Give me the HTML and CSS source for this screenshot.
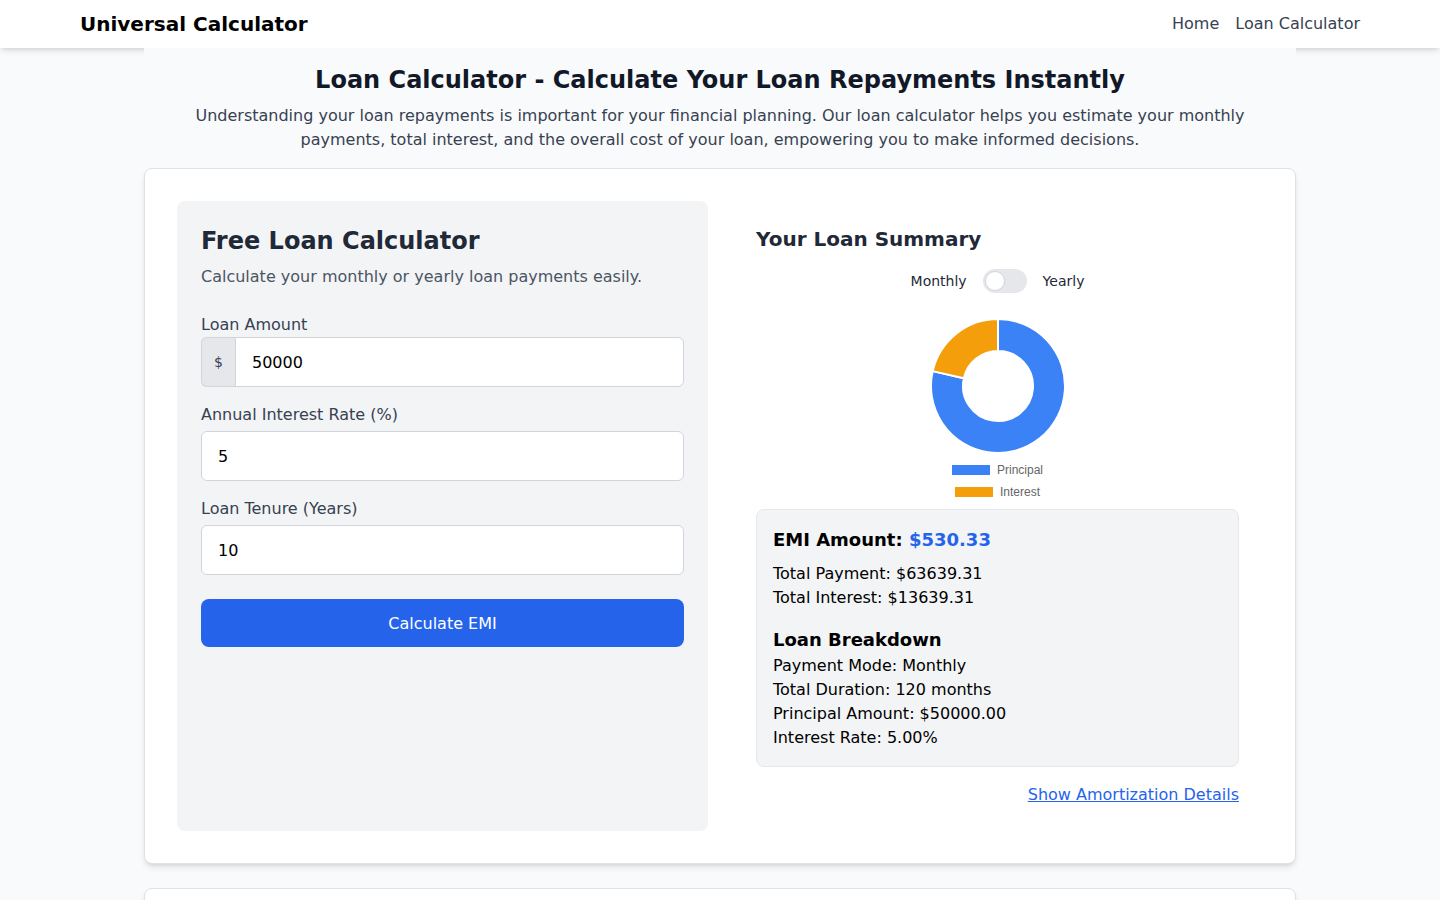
FILE: index.html
```html
<!DOCTYPE html>
<html lang="en">
<head>
    <meta charset="UTF-8">
    <meta name="viewport" content="width=device-width, initial-scale=1.0">
    <title>Loan Calculator - Universal Calculator</title>
    <link rel="stylesheet" href="styles.css">
</head>

<body>

    <!-- Header -->
    <header class="header">
        <div class="header-inner">
            <a class="brand" href="#">Universal Calculator</a>
            <nav class="nav">
                <a href="#">Home</a>
                <a href="#">Loan Calculator</a>
            </nav>
        </div>
    </header>

    <main class="container">
        <h1>Loan Calculator - Calculate Your Loan Repayments Instantly</h1>
        <p class="intro">Understanding your loan repayments is important for your financial planning. Our loan calculator helps you estimate your monthly payments, total interest, and the overall cost of your loan, empowering you to make informed decisions.</p>

        <!-- Calculator card -->
        <section class="card calc-card">
            <div class="calc-grid">

                <!-- Form -->
                <div class="form-panel">
                    <h2>Free Loan Calculator</h2>
                    <p class="form-sub">Calculate your monthly or yearly loan payments easily.</p>

                    <div class="field field-group">
                        <label for="amount">Loan Amount</label>
                        <div class="input-group">
                            <span class="prefix">$</span>
                            <input type="text" id="amount" value="50000">
                        </div>
                    </div>

                    <div class="field">
                        <label for="rate">Annual Interest Rate (%)</label>
                        <input type="text" id="rate" value="5">
                    </div>

                    <div class="field">
                        <label for="tenure">Loan Tenure (Years)</label>
                        <input type="text" id="tenure" value="10">
                    </div>

                    <button class="calc-btn">Calculate EMI</button>
                </div>

                <!-- Summary -->
                <div class="summary-panel">
                    <h3>Your Loan Summary</h3>

                    <div class="toggle-row">
                        <span>Monthly</span>
                        <span class="toggle"><span class="knob"></span></span>
                        <span>Yearly</span>
                    </div>

                    <div class="chart">
                        <svg width="136" height="136" viewBox="0 0 136 136">
                            <path d="M68 1 A67 67 0 1 1 2.67 53.10 L33.87 60.22 A35 35 0 1 0 68 33 Z" fill="#3b82f6" stroke="#fff" stroke-width="2"/>
                            <path d="M2.67 53.10 A67 67 0 0 1 68 1 L68 33 A35 35 0 0 0 33.87 60.22 Z" fill="#f59e0b" stroke="#fff" stroke-width="2"/>
                        </svg>
                        <div class="legend">
                            <div class="legend-item"><span class="swatch blue"></span>Principal</div>
                            <div class="legend-item"><span class="swatch orange"></span>Interest</div>
                        </div>
                    </div>

                    <div class="result-box">
                        <h4>EMI Amount: <span class="emi">$530.33</span></h4>
                        <p>Total Payment: $63639.31</p>
                        <p>Total Interest: $13639.31</p>

                        <h4 class="breakdown">Loan Breakdown</h4>
                        <p>Payment Mode: Monthly</p>
                        <p>Total Duration: 120 months</p>
                        <p>Principal Amount: $50000.00</p>
                        <p>Interest Rate: 5.00%</p>
                    </div>

                    <div class="link-row">
                        <a href="#">Show Amortization Details</a>
                    </div>
                </div>
            </div>
        </section>

        <!-- Info card -->
        <section class="card info-card">
            <h2>How Loan Repayments Work</h2>
            <p>Your EMI depends on the loan amount, the interest rate and the tenure you choose.</p>
        </section>
    </main>

</body>
</html>
```

FILE: styles.css
```css
/* Base styles */
body {
    font-family: "DejaVu Sans", sans-serif;
    margin: 0;
    padding: 0;
    background-color: #f9fafb;
    color: #111827;
    font-size: 16px;
    line-height: 24px;
}

a {
    text-decoration: none;
}

/* Header */
.header {
    background: #fff;
    box-shadow: 0 4px 6px -1px rgba(0, 0, 0, 0.1), 0 2px 4px -2px rgba(0, 0, 0, 0.1);
}

.header-inner {
    max-width: 1280px;
    margin: 0 auto;
    height: 48px;
    display: flex;
    align-items: center;
    justify-content: space-between;
}

.brand {
    color: #000;
    font-size: 20px;
    font-weight: bold;
}

.nav {
    display: flex;
    gap: 16px;
}

.nav a {
    color: #374151;
}

/* Container */
.container {
    position: relative;
    max-width: 1152px;
    margin: 0 auto;
    padding-top: 16px;
    background-color: #f9fafb;
}

h1 {
    margin: 0 0 8px;
    font-size: 24px;
    line-height: 32px;
    text-align: center;
    color: #111827;
}

.intro {
    margin: 0 0 16px;
    padding: 0 16px;
    text-align: center;
    color: #374151;
}

/* Cards */
.card {
    background: #fff;
    border: 1px solid #dfe2e7;
    border-radius: 8px;
    box-shadow: 0 4px 6px -1px rgba(0, 0, 0, 0.1), 0 2px 4px -2px rgba(0, 0, 0, 0.1);
}

.calc-card {
    padding: 32px;
    margin-bottom: 24px;
}

.calc-grid {
    display: grid;
    grid-template-columns: 1fr 1fr;
    gap: 24px;
}

/* Form panel */
.form-panel {
    background: #f3f4f6;
    border-radius: 8px;
    padding: 24px;
}

.form-panel h2 {
    margin: 0 0 8px;
    font-size: 24px;
    line-height: 32px;
    color: #1f2937;
}

.form-sub {
    margin: 0 0 24px;
    color: #4b5563;
}

.field {
    margin-bottom: 16px;
}

.field label {
    display: block;
    margin-bottom: 4px;
    color: #374151;
}

.field-group label {
    margin-bottom: 0;
}

.field input {
    display: block;
    width: 100%;
    box-sizing: border-box;
    height: 50px;
    padding: 12px 16px;
    border: 1px solid #d1d5db;
    border-radius: 6px;
    background: #fff;
    font-family: inherit;
    font-size: 16px;
    color: #000;
    outline: none;
}

.input-group {
    display: flex;
}

.prefix {
    display: flex;
    align-items: center;
    justify-content: center;
    flex-shrink: 0;
    width: 33px;
    background: #e5e7eb;
    border: 1px solid #d1d5db;
    border-right: none;
    border-radius: 6px 0 0 6px;
    font-size: 14px;
    color: #374151;
}

.input-group input {
    border-radius: 0 6px 6px 0;
}

.calc-btn {
    display: block;
    width: 100%;
    height: 48px;
    margin-top: 24px;
    background: #2563eb;
    color: #fff;
    border: none;
    border-radius: 8px;
    font-family: inherit;
    font-size: 16px;
    cursor: pointer;
}

/* Summary panel */
.summary-panel {
    padding: 24px;
}

.summary-panel h3 {
    margin: 0;
    font-size: 20px;
    line-height: 28px;
    color: #1f2937;
}

.toggle-row {
    display: flex;
    justify-content: center;
    align-items: center;
    gap: 16px;
    margin-top: 16px;
    font-size: 14px;
    color: #1f2937;
}

.toggle {
    position: relative;
    width: 44px;
    height: 24px;
    border-radius: 12px;
    background: #e5e7eb;
}

.knob {
    position: absolute;
    top: 2px;
    left: 2px;
    width: 18px;
    height: 18px;
    border-radius: 50%;
    background: #fff;
    border: 1px solid #d1d5db;
}

.chart {
    display: flex;
    flex-direction: column;
    align-items: center;
    margin-top: 25px;
}

.chart svg {
    display: block;
}

.legend {
    margin-top: 5px;
    font-family: "Liberation Sans", Arial, sans-serif;
    font-size: 12px;
    color: #666;
}

.legend-item {
    display: flex;
    align-items: center;
    justify-content: center;
    height: 22px;
}

.swatch {
    display: inline-block;
    width: 38px;
    height: 10px;
    margin-right: 7px;
}

.swatch.blue {
    background: #3b82f6;
}

.swatch.orange {
    background: #f59e0b;
}

.result-box {
    margin-top: 6px;
    padding: 16px;
    background: #f3f4f6;
    border: 1px solid #e5e7eb;
    border-radius: 8px;
    color: #000;
}

.result-box h4 {
    margin: 0 0 8px;
    font-size: 18px;
    line-height: 28px;
}

.result-box h4.breakdown {
    margin: 16px 0 0;
}

.result-box p {
    margin: 0;
}

.emi {
    color: #2563eb;
}

.link-row {
    margin-top: 16px;
    text-align: right;
}

.link-row a {
    color: #2563eb;
    text-decoration: underline;
}

/* Info card */
.info-card {
    padding: 32px;
    margin-bottom: 32px;
}

.info-card h2 {
    margin: 0 0 8px;
    font-size: 20px;
}

.info-card p {
    margin: 0;
    color: #374151;
}
```
